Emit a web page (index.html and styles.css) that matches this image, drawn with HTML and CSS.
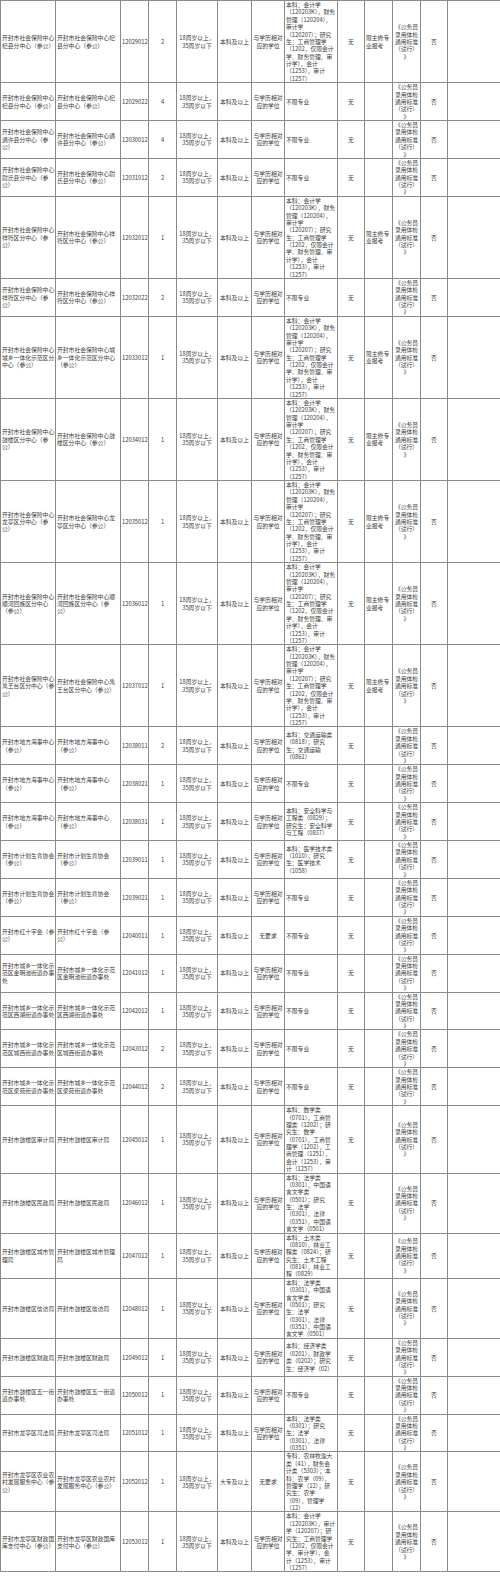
FILE: index.html
```html
<!DOCTYPE html>
<html lang="zh-CN">
<head>
<meta charset="utf-8">
<title>职位表</title>
<link rel="stylesheet" href="styles.css">
</head>
<body>
<table class="t">
<colgroup>
<col class="w1"><col class="w2"><col class="w3"><col class="w4"><col class="w5"><col class="w6"><col class="w7"><col class="w8"><col class="w9"><col class="w10"><col class="w11"><col class="w12"><col class="w13">
</colgroup>
<tbody>
<tr><td class="l">开封市社会保险中心<br>杞县分中心（参公）</td><td class="l">开封市社会保险中心杞<br>县分中心（参公）</td><td>12029012</td><td>2</td><td>18周岁以上，<br>35周岁以下</td><td>本科及以上</td><td>与学历相对<br>应的学位</td><td class="l">本科：会计学<br>（120203K），财务<br>管理（120204），<br>审计学<br>（120207）；研究<br>生：工商管理学<br>（1202，仅限会计<br>学、财务管理、审<br>计学），会计<br>（1253），审计<br>（1257）</td><td>无</td><td class="l">限主修专<br>业报考</td><td>《公务员<br>录用体检<br>通用标准<br>（试行）<br>》</td><td>否</td><td class="e"></td></tr>
<tr><td class="l">开封市社会保险中心<br>杞县分中心（参公）</td><td class="l">开封市社会保险中心杞<br>县分中心（参公）</td><td>12029022</td><td>4</td><td>18周岁以上，<br>35周岁以下</td><td>本科及以上</td><td>与学历相对<br>应的学位</td><td class="l">不限专业</td><td>无</td><td class="l"></td><td>《公务员<br>录用体检<br>通用标准<br>（试行）<br>》</td><td>否</td><td class="e"></td></tr>
<tr><td class="l">开封市社会保险中心<br>通许县分中心（参<br>公）</td><td class="l">开封市社会保险中心通<br>许县分中心（参公）</td><td>12030012</td><td>4</td><td>18周岁以上，<br>35周岁以下</td><td>本科及以上</td><td>与学历相对<br>应的学位</td><td class="l">不限专业</td><td>无</td><td class="l"></td><td>《公务员<br>录用体检<br>通用标准<br>（试行）<br>》</td><td>否</td><td class="e"></td></tr>
<tr><td class="l">开封市社会保险中心<br>尉氏县分中心（参<br>公）</td><td class="l">开封市社会保险中心尉<br>氏县分中心（参公）</td><td>12031012</td><td>2</td><td>18周岁以上，<br>35周岁以下</td><td>本科及以上</td><td>与学历相对<br>应的学位</td><td class="l">不限专业</td><td>无</td><td class="l"></td><td>《公务员<br>录用体检<br>通用标准<br>（试行）<br>》</td><td>否</td><td class="e"></td></tr>
<tr><td class="l">开封市社会保险中心<br>祥符区分中心（参<br>公）</td><td class="l">开封市社会保险中心祥<br>符区分中心（参公）</td><td>12032012</td><td>1</td><td>18周岁以上，<br>35周岁以下</td><td>本科及以上</td><td>与学历相对<br>应的学位</td><td class="l">本科：会计学<br>（120203K），财务<br>管理（120204），<br>审计学<br>（120207）；研究<br>生：工商管理学<br>（1202，仅限会计<br>学、财务管理、审<br>计学），会计<br>（1253），审计<br>（1257）</td><td>无</td><td class="l">限主修专<br>业报考</td><td>《公务员<br>录用体检<br>通用标准<br>（试行）<br>》</td><td>否</td><td class="e"></td></tr>
<tr><td class="l">开封市社会保险中心<br>祥符区分中心（参<br>公）</td><td class="l">开封市社会保险中心祥<br>符区分中心（参公）</td><td>12032022</td><td>2</td><td>18周岁以上，<br>35周岁以下</td><td>本科及以上</td><td>与学历相对<br>应的学位</td><td class="l">不限专业</td><td>无</td><td class="l"></td><td>《公务员<br>录用体检<br>通用标准<br>（试行）<br>》</td><td>否</td><td class="e"></td></tr>
<tr><td class="l">开封市社会保险中心<br>城乡一体化示范区分<br>中心（参公）</td><td class="l">开封市社会保险中心城<br>乡一体化示范区分中心<br>（参公）</td><td>12033012</td><td>1</td><td>18周岁以上，<br>35周岁以下</td><td>本科及以上</td><td>与学历相对<br>应的学位</td><td class="l">本科：会计学<br>（120203K），财务<br>管理（120204），<br>审计学<br>（120207）；研究<br>生：工商管理学<br>（1202，仅限会计<br>学、财务管理、审<br>计学），会计<br>（1253），审计<br>（1257）</td><td>无</td><td class="l">限主修专<br>业报考</td><td>《公务员<br>录用体检<br>通用标准<br>（试行）<br>》</td><td>否</td><td class="e"></td></tr>
<tr><td class="l">开封市社会保险中心<br>鼓楼区分中心（参<br>公）</td><td class="l">开封市社会保险中心鼓<br>楼区分中心（参公）</td><td>12034012</td><td>1</td><td>18周岁以上，<br>35周岁以下</td><td>本科及以上</td><td>与学历相对<br>应的学位</td><td class="l">本科：会计学<br>（120203K），财务<br>管理（120204），<br>审计学<br>（120207）；研究<br>生：工商管理学<br>（1202，仅限会计<br>学、财务管理、审<br>计学），会计<br>（1253），审计<br>（1257）</td><td>无</td><td class="l">限主修专<br>业报考</td><td>《公务员<br>录用体检<br>通用标准<br>（试行）<br>》</td><td>否</td><td class="e"></td></tr>
<tr><td class="l">开封市社会保险中心<br>龙亭区分中心（参<br>公）</td><td class="l">开封市社会保险中心龙<br>亭区分中心（参公）</td><td>12035012</td><td>1</td><td>18周岁以上，<br>35周岁以下</td><td>本科及以上</td><td>与学历相对<br>应的学位</td><td class="l">本科：会计学<br>（120203K），财务<br>管理（120204），<br>审计学<br>（120207）；研究<br>生：工商管理学<br>（1202，仅限会计<br>学、财务管理、审<br>计学），会计<br>（1253），审计<br>（1257）</td><td>无</td><td class="l">限主修专<br>业报考</td><td>《公务员<br>录用体检<br>通用标准<br>（试行）<br>》</td><td>否</td><td class="e"></td></tr>
<tr><td class="l">开封市社会保险中心<br>顺河回族区分中心<br>（参公）</td><td class="l">开封市社会保险中心顺<br>河回族区分中心（参<br>公）</td><td>12036012</td><td>1</td><td>18周岁以上，<br>35周岁以下</td><td>本科及以上</td><td>与学历相对<br>应的学位</td><td class="l">本科：会计学<br>（120203K），财务<br>管理（120204），<br>审计学<br>（120207）；研究<br>生：工商管理学<br>（1202，仅限会计<br>学、财务管理、审<br>计学），会计<br>（1253），审计<br>（1257）</td><td>无</td><td class="l">限主修专<br>业报考</td><td>《公务员<br>录用体检<br>通用标准<br>（试行）<br>》</td><td>否</td><td class="e"></td></tr>
<tr><td class="l">开封市社会保险中心<br>禹王台区分中心（参<br>公）</td><td class="l">开封市社会保险中心禹<br>王台区分中心（参公）</td><td>12037012</td><td>1</td><td>18周岁以上，<br>35周岁以下</td><td>本科及以上</td><td>与学历相对<br>应的学位</td><td class="l">本科：会计学<br>（120203K），财务<br>管理（120204），<br>审计学<br>（120207）；研究<br>生：工商管理学<br>（1202，仅限会计<br>学、财务管理、审<br>计学），会计<br>（1253），审计<br>（1257）</td><td>无</td><td class="l">限主修专<br>业报考</td><td>《公务员<br>录用体检<br>通用标准<br>（试行）<br>》</td><td>否</td><td class="e"></td></tr>
<tr><td class="l">开封市地方海事中心<br>（参公）</td><td class="l">开封市地方海事中心<br>（参公）</td><td>12038011</td><td>2</td><td>18周岁以上，<br>35周岁以下</td><td>本科及以上</td><td>与学历相对<br>应的学位</td><td class="l">本科：交通运输类<br>（0818）；研究<br>生：交通运输<br>（0861）</td><td>无</td><td class="l"></td><td>《公务员<br>录用体检<br>通用标准<br>（试行）<br>》</td><td>否</td><td class="e"></td></tr>
<tr><td class="l">开封市地方海事中心<br>（参公）</td><td class="l">开封市地方海事中心<br>（参公）</td><td>12038021</td><td>1</td><td>18周岁以上，<br>35周岁以下</td><td>本科及以上</td><td>与学历相对<br>应的学位</td><td class="l">不限专业</td><td>无</td><td class="l"></td><td>《公务员<br>录用体检<br>通用标准<br>（试行）<br>》</td><td>否</td><td class="e"></td></tr>
<tr><td class="l">开封市地方海事中心<br>（参公）</td><td class="l">开封市地方海事中心<br>（参公）</td><td>12038031</td><td>1</td><td>18周岁以上，<br>35周岁以下</td><td>本科及以上</td><td>与学历相对<br>应的学位</td><td class="l">本科：安全科学与<br>工程类（0829）；<br>研究生：安全科学<br>与工程（0837）</td><td>无</td><td class="l"></td><td>《公务员<br>录用体检<br>通用标准<br>（试行）<br>》</td><td>否</td><td class="e"></td></tr>
<tr><td class="l">开封市计划生育协会<br>（参公）</td><td class="l">开封市计划生育协会<br>（参公）</td><td>12039011</td><td>1</td><td>18周岁以上，<br>35周岁以下</td><td>本科及以上</td><td>与学历相对<br>应的学位</td><td class="l">本科：医学技术类<br>（1010）；研究<br>生：医学技术<br>（1058）</td><td>无</td><td class="l"></td><td>《公务员<br>录用体检<br>通用标准<br>（试行）<br>》</td><td>否</td><td class="e"></td></tr>
<tr><td class="l">开封市计划生育协会<br>（参公）</td><td class="l">开封市计划生育协会<br>（参公）</td><td>12039021</td><td>1</td><td>18周岁以上，<br>35周岁以下</td><td>本科及以上</td><td>与学历相对<br>应的学位</td><td class="l">不限专业</td><td>无</td><td class="l"></td><td>《公务员<br>录用体检<br>通用标准<br>（试行）<br>》</td><td>否</td><td class="e"></td></tr>
<tr><td class="l">开封市红十字会（参<br>公）</td><td class="l">开封市红十字会（参<br>公）</td><td>12040011</td><td>1</td><td>18周岁以上，<br>35周岁以下</td><td>本科及以上</td><td>无要求</td><td class="l">不限专业</td><td>无</td><td class="l"></td><td>《公务员<br>录用体检<br>通用标准<br>（试行）<br>》</td><td>否</td><td class="e"></td></tr>
<tr><td class="l">开封市城乡一体化示<br>范区金明池街道办事<br>处</td><td class="l">开封市城乡一体化示范<br>区金明池街道办事处</td><td>12041012</td><td>1</td><td>18周岁以上，<br>35周岁以下</td><td>本科及以上</td><td>与学历相对<br>应的学位</td><td class="l">不限专业</td><td>无</td><td class="l"></td><td>《公务员<br>录用体检<br>通用标准<br>（试行）<br>》</td><td>否</td><td class="e"></td></tr>
<tr><td class="l">开封市城乡一体化示<br>范区西湖街道办事处</td><td class="l">开封市城乡一体化示范<br>区西湖街道办事处</td><td>12042012</td><td>1</td><td>18周岁以上，<br>35周岁以下</td><td>本科及以上</td><td>与学历相对<br>应的学位</td><td class="l">不限专业</td><td>无</td><td class="l"></td><td>《公务员<br>录用体检<br>通用标准<br>（试行）<br>》</td><td>否</td><td class="e"></td></tr>
<tr><td class="l">开封市城乡一体化示<br>范区城西街道办事处</td><td class="l">开封市城乡一体化示范<br>区城西街道办事处</td><td>12043012</td><td>2</td><td>18周岁以上，<br>35周岁以下</td><td>本科及以上</td><td>与学历相对<br>应的学位</td><td class="l">不限专业</td><td>无</td><td class="l"></td><td>《公务员<br>录用体检<br>通用标准<br>（试行）<br>》</td><td>否</td><td class="e"></td></tr>
<tr><td class="l">开封市城乡一体化示<br>范区梁苑街道办事处</td><td class="l">开封市城乡一体化示范<br>区梁苑街道办事处</td><td>12044012</td><td>2</td><td>18周岁以上，<br>35周岁以下</td><td>本科及以上</td><td>与学历相对<br>应的学位</td><td class="l">不限专业</td><td>无</td><td class="l"></td><td>《公务员<br>录用体检<br>通用标准<br>（试行）<br>》</td><td>否</td><td class="e"></td></tr>
<tr><td class="l">开封市鼓楼区审计局</td><td class="l">开封市鼓楼区审计局</td><td>12045012</td><td>1</td><td>18周岁以上，<br>35周岁以下</td><td>本科及以上</td><td>与学历相对<br>应的学位</td><td class="l">本科：数学类<br>（0701），工商管<br>理类（1202）；研<br>究生：数学<br>（0701），工商管<br>理学（1202），工<br>商管理（1251），<br>会计（1253），审<br>计（1257）</td><td>无</td><td class="l"></td><td>《公务员<br>录用体检<br>通用标准<br>（试行）<br>》</td><td>否</td><td class="e"></td></tr>
<tr><td class="l">开封市鼓楼区民政局</td><td class="l">开封市鼓楼区民政局</td><td>12046012</td><td>1</td><td>18周岁以上，<br>35周岁以下</td><td>本科及以上</td><td>与学历相对<br>应的学位</td><td class="l">本科：法学类<br>（0301），中国语<br>言文学类<br>（0501）；研究<br>生：法学<br>（0301），法律<br>（0351），中国语<br>言文学（0501）</td><td>无</td><td class="l"></td><td>《公务员<br>录用体检<br>通用标准<br>（试行）<br>》</td><td>否</td><td class="e"></td></tr>
<tr><td class="l">开封市鼓楼区城市管<br>理局</td><td class="l">开封市鼓楼区城市管理<br>局</td><td>12047012</td><td>1</td><td>18周岁以上，<br>35周岁以下</td><td>本科及以上</td><td>与学历相对<br>应的学位</td><td class="l">本科：土木类<br>（0810），林业工<br>程类（0824）；研<br>究生：土木工程<br>（0814），林业工<br>程（0829）</td><td>无</td><td class="l"></td><td>《公务员<br>录用体检<br>通用标准<br>（试行）<br>》</td><td>否</td><td class="e"></td></tr>
<tr><td class="l">开封市鼓楼区信访局</td><td class="l">开封市鼓楼区信访局</td><td>12048012</td><td>1</td><td>18周岁以上，<br>35周岁以下</td><td>本科及以上</td><td>与学历相对<br>应的学位</td><td class="l">本科：法学类<br>（0301），中国语<br>言文学类<br>（0501）；研究<br>生：法学<br>（0301），法律<br>（0351），中国语<br>言文学（0501）</td><td>无</td><td class="l"></td><td>《公务员<br>录用体检<br>通用标准<br>（试行）<br>》</td><td>否</td><td class="e"></td></tr>
<tr><td class="l">开封市鼓楼区财政局</td><td class="l">开封市鼓楼区财政局</td><td>12049012</td><td>1</td><td>18周岁以上，<br>35周岁以下</td><td>本科及以上</td><td>与学历相对<br>应的学位</td><td class="l">本科：经济学类<br>（0201），财政学<br>类（0202）；研究<br>生：经济学（02）</td><td>无</td><td class="l"></td><td>《公务员<br>录用体检<br>通用标准<br>（试行）<br>》</td><td>否</td><td class="e"></td></tr>
<tr><td class="l">开封市鼓楼区五一街<br>道办事处</td><td class="l">开封市鼓楼区五一街道<br>办事处</td><td>12050012</td><td>1</td><td>18周岁以上，<br>35周岁以下</td><td>本科及以上</td><td>与学历相对<br>应的学位</td><td class="l">不限专业</td><td>无</td><td class="l"></td><td>《公务员<br>录用体检<br>通用标准<br>（试行）<br>》</td><td>否</td><td class="e"></td></tr>
<tr><td class="l">开封市龙亭区司法局</td><td class="l">开封市龙亭区司法局</td><td>12051012</td><td>1</td><td>18周岁以上，<br>35周岁以下</td><td>本科及以上</td><td>与学历相对<br>应的学位</td><td class="l">本科：法学类<br>（0301）；研究<br>生：法学<br>（0301），法律<br>（0351）</td><td>无</td><td class="l"></td><td>《公务员<br>录用体检<br>通用标准<br>（试行）<br>》</td><td>否</td><td class="e"></td></tr>
<tr><td class="l">开封市龙亭区农业农<br>村发展服务中心（参<br>公）</td><td class="l">开封市龙亭区农业农村<br>发展服务中心（参公）</td><td>12052012</td><td>1</td><td>18周岁以上，<br>35周岁以下</td><td>大专及以上</td><td>无要求</td><td class="l">专科：农林牧渔大<br>类（41），财务会<br>计类（5303）；本<br>科：农学（09），<br>管理学（12）；研<br>究生：农学<br>（09），管理学<br>（12）</td><td>无</td><td class="l"></td><td>《公务员<br>录用体检<br>通用标准<br>（试行）<br>》</td><td>否</td><td class="e"></td></tr>
<tr><td class="l">开封市龙亭区财政国<br>库支付中心（参公）</td><td class="l">开封市龙亭区财政国库<br>支付中心（参公）</td><td>12053012</td><td>1</td><td>18周岁以上，<br>35周岁以下</td><td>本科及以上</td><td>与学历相对<br>应的学位</td><td class="l">本科：会计学<br>（120203K），审计<br>学（120207）；研<br>究生：工商管理学<br>（1202，仅限会计<br>学、审计学），会<br>计（1253），审计<br>（1257）</td><td>无</td><td class="l"></td><td>《公务员<br>录用体检<br>通用标准<br>（试行）<br>》</td><td>否</td><td class="e"></td></tr>
</tbody>
</table>
</body>
</html>
```

FILE: styles.css
```css
html, body {
  margin: 0;
  padding: 0;
  background: #ffffff;
}

body {
  overflow: hidden;
}

.t {
  width: 500px;
  table-layout: fixed;
  border-collapse: collapse;
  font-family: "Noto Sans CJK SC", sans-serif;
  font-size: 5.8px;
  line-height: 7.38px;
  color: #3a3a3a;
}

.w1 { width: 55px; }
.w2 { width: 65px; }
.w3 { width: 28px; }
.w4 { width: 28px; }
.w5 { width: 41px; }
.w6 { width: 34px; }
.w7 { width: 33px; }
.w8 { width: 53px; }
.w9 { width: 27px; }
.w10 { width: 28px; }
.w11 { width: 28px; }
.w12 { width: 27px; }
.w13 { width: 53px; }

.t td {
  border: 1px solid #8a8a8a;
  padding: 0 1px;
  text-align: center;
  vertical-align: middle;
  white-space: nowrap;
  overflow: visible;
}

.t td.l {
  text-align: left;
}

.t td.e {
  border-right-style: hidden;
}
```
